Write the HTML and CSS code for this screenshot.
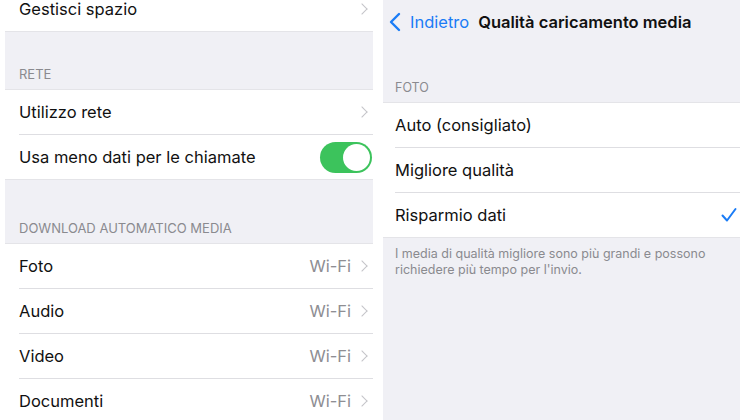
FILE: index.html
```html
<!DOCTYPE html>
<html lang="it">
<head>
    <meta charset="UTF-8">
    <meta name="viewport" content="width=device-width, initial-scale=1.0">
    <title>Impostazioni archiviazione e dati</title>
    <link rel="stylesheet" href="styles.css">
</head>
<body>
    <div class="screen">
        <section class="panel panel-left">
            <ul class="group group-first">
                <li class="cell">
                    <span class="label">Gestisci spazio</span>
                    <span class="chevron"></span>
                </li>
            </ul>

            <div class="group-header header-rete">RETE</div>
            <ul class="group">
                <li class="cell">
                    <span class="label">Utilizzo rete</span>
                    <span class="chevron"></span>
                </li>
                <li class="cell">
                    <span class="label">Usa meno dati per le chiamate</span>
                    <span class="toggle on"><span class="knob"></span></span>
                </li>
            </ul>

            <div class="group-header header-download">DOWNLOAD AUTOMATICO MEDIA</div>
            <ul class="group">
                <li class="cell">
                    <span class="label">Foto</span>
                    <span class="detail">Wi-Fi</span>
                    <span class="chevron"></span>
                </li>
                <li class="cell">
                    <span class="label">Audio</span>
                    <span class="detail">Wi-Fi</span>
                    <span class="chevron"></span>
                </li>
                <li class="cell">
                    <span class="label">Video</span>
                    <span class="detail">Wi-Fi</span>
                    <span class="chevron"></span>
                </li>
                <li class="cell">
                    <span class="label">Documenti</span>
                    <span class="detail">Wi-Fi</span>
                    <span class="chevron"></span>
                </li>
            </ul>
        </section>

        <section class="panel panel-right">
            <nav class="navbar">
                <a class="back" href="#">
                    <svg class="back-icon" width="12" height="20" viewBox="0 0 12 20">
                        <path d="M10 2 L2 10 L10 18" fill="none" stroke="#1a7cf6" stroke-width="2.4" stroke-linecap="round" stroke-linejoin="round"/>
                    </svg>
                    Indietro
                </a>
                <span class="title">Qualità caricamento media</span>
            </nav>

            <div class="group-header header-foto">FOTO</div>
            <ul class="group">
                <li class="cell">
                    <span class="label">Auto (consigliato)</span>
                </li>
                <li class="cell">
                    <span class="label">Migliore qualità</span>
                </li>
                <li class="cell">
                    <span class="label">Risparmio dati</span>
                    <svg class="check" width="16" height="16" viewBox="0 0 16 16">
                        <path d="M1.5 8.5 L6 13.5 L14.5 2" fill="none" stroke="#1a7cf6" stroke-width="2" stroke-linecap="round" stroke-linejoin="round"/>
                    </svg>
                </li>
            </ul>
            <p class="group-footer">I media di qualità migliore sono più grandi e possono richiedere più tempo per l'invio.</p>
        </section>
    </div>
</body>
</html>
```

FILE: styles.css
```css
html, body {
    margin: 0;
    padding: 0;
    height: 100%;
    background-color: #ffffff;
    font-family: Inter, "Liberation Sans", Arial, sans-serif;
    color: #111111;
    overflow: hidden;
}
.screen {
    display: flex;
    gap: 10px;
    height: 420px;
    padding-left: 5px;
}
.panel {
    background-color: #f0f0f5;
    display: flex;
    flex-direction: column;
    overflow: hidden;
}
.panel > * {
    flex-shrink: 0;
}
.panel-left {
    width: 368px;
}
.panel-right {
    flex: 1;
}
.group {
    list-style: none;
    margin: 0;
    padding: 0;
    background-color: #ffffff;
    border-top: 1px solid #e4e4e8;
    border-bottom: 1px solid #e4e4e8;
}
.group-first {
    margin-top: -13px;
    border-top: none;
}
.cell {
    display: flex;
    align-items: center;
    height: 44px;
    padding-right: 3px;
    margin-left: 14px;
    border-bottom: 1px solid #dedee2;
    font-size: 16.5px;
}
.cell:last-child {
    border-bottom: none;
}
.label {
    flex: 1;
}
.detail {
    color: #8e8e93;
    margin-right: 7px;
}
.chevron {
    width: 7px;
    height: 7px;
    border-top: 1.5px solid #c4c4c8;
    border-right: 1.5px solid #c4c4c8;
    transform: rotate(45deg);
    margin-right: 4px;
}
.toggle {
    width: 52px;
    height: 31px;
    border-radius: 16px;
    background-color: #3cc35c;
    display: flex;
    align-items: center;
    justify-content: flex-end;
    padding: 2px;
    box-sizing: border-box;
    margin-right: -2px;
}
.knob {
    width: 27px;
    height: 27px;
    border-radius: 50%;
    background-color: #ffffff;
}
.group-header {
    display: flex;
    align-items: flex-end;
    font-size: 13px;
    color: #8a8a8f;
    padding: 0 0 7px 14px;
    box-sizing: border-box;
}
.header-rete {
    height: 57px;
}
.header-download {
    height: 63px;
}
.panel-right .cell {
    margin-left: 12px;
}
.panel-right .group-header {
    padding-left: 12px;
    font-size: 12.5px;
}
.navbar {
    display: flex;
    align-items: center;
    height: 44px;
    padding-left: 6px;
}
.back {
    display: flex;
    align-items: center;
    gap: 9px;
    color: #1a7cf6;
    text-decoration: none;
    font-size: 16.5px;
    margin-right: 9px;
}
.title {
    font-weight: 600;
    font-size: 16.5px;
}
.header-foto {
    height: 58px;
}
.group-footer {
    margin: 0;
    padding: 8px 20px 0 12px;
    font-size: 12.5px;
    line-height: 16px;
    color: #8a8a8f;
}
```
